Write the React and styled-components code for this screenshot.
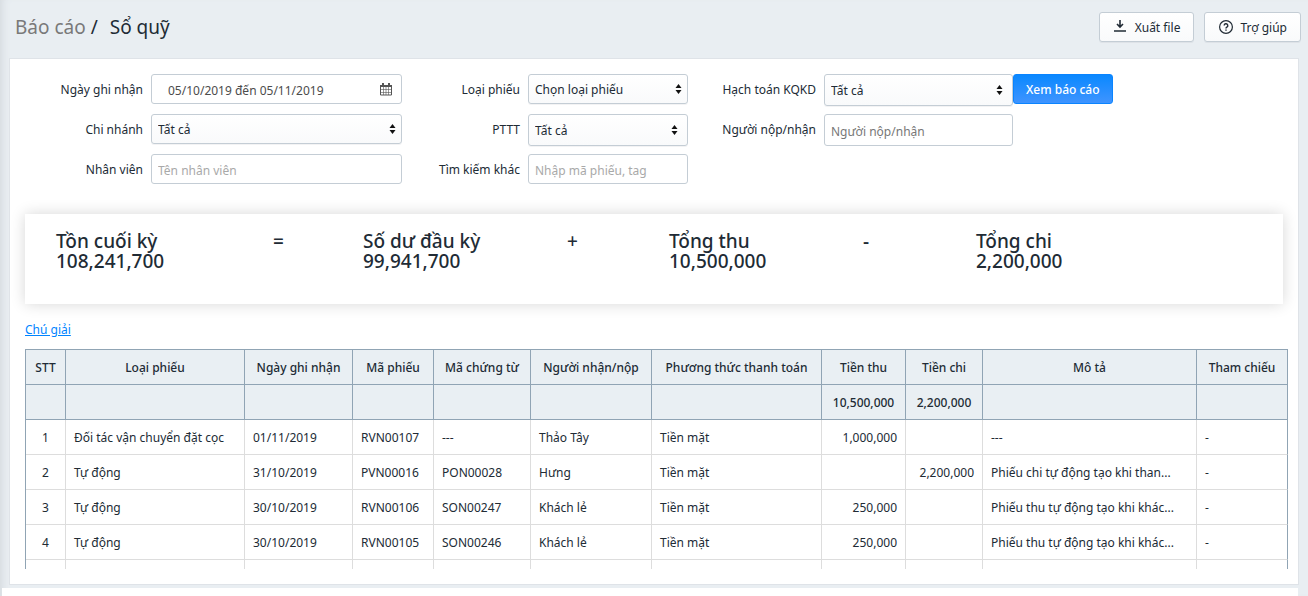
import React, { useState } from "react";
import styled, { createGlobalStyle } from "styled-components";

const GlobalStyle = createGlobalStyle`
  * {
    box-sizing: border-box;
  }
  body {
    margin: 0;
    background: #e9eef2;
    color: #212b35;
    font-family: "Noto Sans", "Open Sans", sans-serif;
    font-size: 12px;
    line-height: 20px;
  }
  button,
  input,
  select {
    font: inherit;
    color: inherit;
  }
`;

const Page = styled.div`
  display: flex;
  flex-direction: column;
  min-height: 100vh;
  box-shadow: inset 8px 0 8px -6px #d3d8dd;
`;

const Header = styled.header`
  display: flex;
  align-items: flex-start;
  justify-content: space-between;
  height: 58px;
  padding: 12px 7px 0 15px;
`;

const Breadcrumb = styled.h1`
  margin: 0;
  font-size: 19px;
  font-weight: 400;
  line-height: 30px;
  a {
    color: #797979;
    text-decoration: none;
  }
  span {
    margin: 0 7px 0 5px;
  }
`;

const Actions = styled.div`
  display: flex;
  gap: 10px;
`;

const ActionButton = styled.button`
  display: flex;
  align-items: center;
  gap: 6px;
  height: 30px;
  padding: 2px 13px 0;
  border: 1px solid #c4cdd5;
  border-radius: 3px;
  background: linear-gradient(to bottom, #fff, #f9fafb);
  box-shadow: 0 1px 0 rgba(22, 29, 37, 0.05);
  cursor: pointer;
  svg {
    margin-bottom: 2px;
  }
`;

const Panel = styled.main`
  margin: 0 9px 0 9px;
  padding: 15px;
  border: 1px solid #dfe3e8;
  background: #fff;
`;

const NextPanel = styled.div`
  flex: 1;
  min-height: 8px;
  margin: 3px 10px 0 2px;
  background: #fff;
`;

const Filters = styled.form`
  display: grid;
  grid-template-columns:
    minmax(0, 126fr) minmax(0, 251fr) minmax(0, 126fr) minmax(0, 160fr)
    minmax(0, 136fr) minmax(0, 189fr) minmax(0, 270fr);
  grid-auto-rows: 30px;
  row-gap: 10px;
  align-items: start;
`;

const Label = styled.label`
  padding-right: 8px;
  line-height: 32px;
  text-align: right;
  white-space: nowrap;
`;

const Control = styled.div`
  display: flex;
  align-items: center;
  height: ${({ $tall }) => ($tall ? "32px" : "30px")};
  border: 1px solid #c4cdd5;
  border-radius: 3px;
  background: ${({ $select }) =>
    $select ? "linear-gradient(to bottom, #fff, #f9fafb)" : "#fff"};
  box-shadow: ${({ $select }) =>
    $select ? "0 1px 0 rgba(22, 29, 37, 0.05)" : "none"};
  svg {
    flex: none;
    margin-right: ${({ $date, $tall }) => ($date || $tall ? "9px" : "5px")};
    pointer-events: none;
  }
`;

const Input = styled.input`
  flex: 1;
  min-width: 0;
  height: 100%;
  padding: 2px 6px 0 ${({ $indent }) => ($indent ? "16px" : "6px")};
  border: 0;
  outline: 0;
  background: transparent;
  color: #4c4c4c;
  &::placeholder {
    color: ${({ $dark }) => ($dark ? "#777" : "#a9a9a9")};
    opacity: 1;
  }
`;

const Select = styled.select`
  flex: 1;
  min-width: 0;
  height: 100%;
  padding: 2px 6px 0;
  border: 0;
  outline: 0;
  appearance: none;
  background: transparent;
`;

const SubmitButton = styled.button`
  justify-self: start;
  height: 30px;
  padding: 2px 12px 0;
  border: 1px solid #0a84ff;
  border-radius: 3px;
  background: linear-gradient(to bottom, #0a88ff, #3f94ff);
  color: #fff;
  font-weight: 500;
  cursor: pointer;
`;

const Summary = styled.section`
  display: grid;
  grid-template-columns: 217fr 90fr 204fr 102fr 194fr 113fr 306fr;
  height: 90px;
  margin-top: 30px;
  padding: 17px 1px 0 31px;
  background: #fff;
  box-shadow: 0 0 14px rgba(0, 0, 0, 0.16);
  font-size: 19px;
  font-weight: 500;
  p {
    margin: 0;
  }
`;

const NoteLink = styled.a`
  display: inline-block;
  margin: 16px 0 9px;
  color: #0084ff;
  text-decoration: underline;
`;

const TableScroll = styled.div`
  max-height: 220px;
  margin-right: -5px;
  overflow: hidden;
`;

const Table = styled.table`
  width: 100%;
  table-layout: fixed;
  border-collapse: separate;
  border-spacing: 0;
  border: solid #90a4b4;
  border-width: 1px 0 0 1px;
  th,
  td {
    height: 35px;
    padding: 2px 8px 0;
    border: solid #ddd;
    border-width: 0 1px 1px 0;
    overflow: hidden;
    white-space: nowrap;
    text-overflow: ellipsis;
  }
  th {
    padding: 2px 0 0;
    border-color: #90a4b4;
    background: #e9eff3;
    font-weight: 500;
  }
  td:last-child {
    border-right-color: #90a4b4;
  }
`;

const Cell = styled.td`
  text-align: ${({ $align }) => $align || "left"};
`;

const columns = [
  { title: "STT", width: 40, align: "center" },
  { title: "Loại phiếu", width: 179 },
  { title: "Ngày ghi nhận", width: 108 },
  { title: "Mã phiếu", width: 81 },
  { title: "Mã chứng từ", width: 97 },
  { title: "Người nhận/nộp", width: 121 },
  { title: "Phương thức thanh toán", width: 170 },
  { title: "Tiền thu", width: 84, align: "right", total: "10,500,000" },
  { title: "Tiền chi", width: 77, align: "right", total: "2,200,000" },
  { title: "Mô tả", width: 214 },
  { title: "Tham chiếu", width: 91 },
];

const rows = [
  ["1", "Đối tác vận chuyển đặt cọc", "01/11/2019", "RVN00107", "---", "Thảo Tây", "Tiền mặt", "1,000,000", "", "---", "-"],
  ["2", "Tự động", "31/10/2019", "PVN00016", "PON00028", "Hưng", "Tiền mặt", "", "2,200,000", "Phiếu chi tự động tạo khi than...", "-"],
  ["3", "Tự động", "30/10/2019", "RVN00106", "SON00247", "Khách lẻ", "Tiền mặt", "250,000", "", "Phiếu thu tự động tạo khi khác...", "-"],
  ["4", "Tự động", "30/10/2019", "RVN00105", "SON00246", "Khách lẻ", "Tiền mặt", "250,000", "", "Phiếu thu tự động tạo khi khác...", "-"],
  ["", "", "", "", "", "", "", "", "", "", ""],
];

const summary = [
  { title: "Tồn cuối kỳ", value: "108,241,700", sign: "=" },
  { title: "Số dư đầu kỳ", value: "99,941,700", sign: "+" },
  { title: "Tổng thu", value: "10,500,000", sign: "-" },
  { title: "Tổng chi", value: "2,200,000" },
];

const DownloadIcon = () => (
  <svg width="16" height="16" viewBox="0 0 16 16" aria-hidden="true">
    <path d="M7 1v7M4 5L7 8L10 5" fill="none" stroke="#212b35" strokeWidth="1.600" />
    <path d="M1 12h12" stroke="#212b35" strokeWidth="1.500" />
  </svg>
);

const HelpIcon = () => (
  <svg width="16" height="16" viewBox="0 0 16 16" fill="none" stroke="#212b35" aria-hidden="true">
    <circle cx="8" cy="8" r="6.400" strokeWidth="1.200" />
    <path d="M6.200 6.600a1.800 1.800 0 1 1 2.700 1.500c-.6.350-.9.600-.9 1.300" strokeWidth="1.400" />
    <path d="M8 10.400v1.400" strokeWidth="1.400" />
  </svg>
);

const CalendarIcon = () => (
  <svg width="12" height="13" viewBox="0 0 12 13" fill="none" stroke="#555" aria-hidden="true">
    <path d="M.5 2.500h11v9.500H.5z" />
    <path d="M0 3h12" strokeWidth="2" />
    <path d="M3 0v3M9 0v3" strokeWidth="2" />
    <path d="M3.500 4v8M6 4v8M8.500 4v8M1 6.500h10M1 9.500h10" strokeWidth=".6" />
  </svg>
);

const Arrows = () => (
  <svg width="7" height="10" viewBox="0 0 7 10" aria-hidden="true">
    <path d="M3.500 0L6.500 4H.5zM3.500 10L6.500 6H.5z" fill="#111" />
  </svg>
);

function SelectField({ id, label, option, tall }) {
  return (
    <>
      <Label htmlFor={id}>{label}</Label>
      <Control $select $tall={tall}>
        <Select id={id}>
          <option>{option}</option>
        </Select>
        <Arrows />
      </Control>
    </>
  );
}

function TextField({ id, label, placeholder, tall }) {
  return (
    <>
      <Label htmlFor={id}>{label}</Label>
      <Control $tall={tall}>
        <Input id={id} placeholder={placeholder} $dark={tall} />
      </Control>
    </>
  );
}

function App() {
  const [range, setRange] = useState("05/10/2019 đến 05/11/2019");

  return (
    <Page>
      <GlobalStyle />
      <Header>
        <Breadcrumb>
          <a href="#reports">Báo cáo</a>
          <span>/</span> Sổ quỹ
        </Breadcrumb>
        <Actions>
          <ActionButton type="button">
            <DownloadIcon />
            Xuất file
          </ActionButton>
          <ActionButton type="button">
            <HelpIcon />
            Trợ giúp
          </ActionButton>
        </Actions>
      </Header>

      <Panel>
        <Filters onSubmit={(e) => e.preventDefault()}>
          <Label htmlFor="range">Ngày ghi nhận</Label>
          <Control $date>
            <Input
              id="range"
              $indent
              value={range}
              onChange={(e) => setRange(e.target.value)}
            />
            <CalendarIcon />
          </Control>
          <SelectField id="type" label="Loại phiếu" option="Chọn loại phiếu" />
          <SelectField id="account" label="Hạch toán KQKD" option="Tất cả" tall />
          <SubmitButton type="submit">Xem báo cáo</SubmitButton>

          <SelectField id="branch" label="Chi nhánh" option="Tất cả" />
          <SelectField id="method" label="PTTT" option="Tất cả" tall />
          <TextField id="payer" label="Người nộp/nhận" placeholder="Người nộp/nhận" tall />
          <div />

          <TextField id="staff" label="Nhân viên" placeholder="Tên nhân viên" />
          <TextField id="search" label="Tìm kiếm khác" placeholder="Nhập mã phiếu, tag" />
        </Filters>

        <Summary>
          {summary.map(({ title, value, sign }) => (
            <React.Fragment key={title}>
              <div>
                <p>{title}</p>
                <p>{value}</p>
              </div>
              {sign && <p>{sign}</p>}
            </React.Fragment>
          ))}
        </Summary>

        <NoteLink href="#note">Chú giải</NoteLink>

        <TableScroll>
          <Table>
            <colgroup>
              {columns.map(({ title, width }) => (
                <col key={title} width={width} />
              ))}
            </colgroup>
            <thead>
              <tr>
                {columns.map(({ title }) => (
                  <th key={title}>{title}</th>
                ))}
              </tr>
              <tr>
                {columns.map(({ title, total }) => (
                  <th key={title}>{total}</th>
                ))}
              </tr>
            </thead>
            <tbody>
              {rows.map((row, i) => (
                <tr key={i}>
                  {row.map((text, j) => (
                    <Cell key={j} $align={columns[j].align}>
                      {text}
                    </Cell>
                  ))}
                </tr>
              ))}
            </tbody>
          </Table>
        </TableScroll>
      </Panel>
      <NextPanel />
    </Page>
  );
}

export default App;
